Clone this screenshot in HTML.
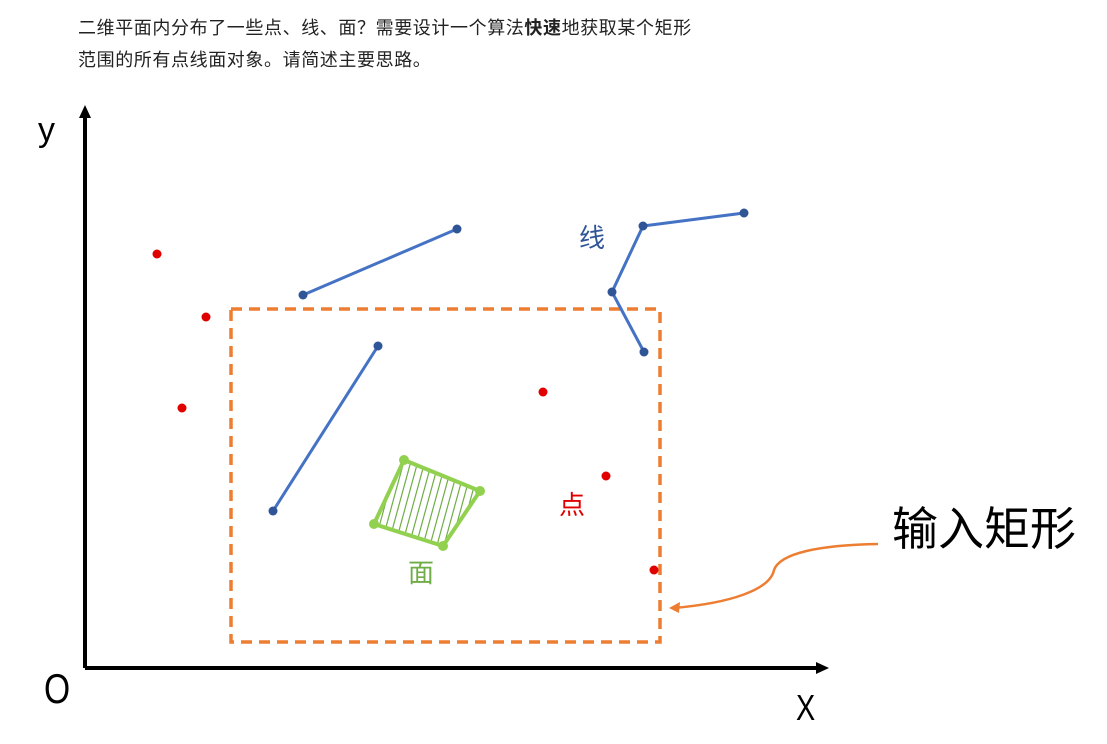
<!DOCTYPE html>
<html><head><meta charset="utf-8"><style>
html,body{margin:0;padding:0;background:#fff;width:1107px;height:744px;overflow:hidden}
.t{position:absolute;left:78px;font-family:"Liberation Sans","Noto Sans CJK SC",sans-serif;font-size:18px;letter-spacing:0.6px;color:#222;line-height:22px;white-space:nowrap}
svg{position:absolute;left:0;top:0}
</style></head><body>
<svg width="1107" height="744" viewBox="0 0 1107 744">
<defs>
<clipPath id="c"><polygon points="404,460 480,491 443,546 374,524"/></clipPath>
</defs>
<line x1="85" y1="668" x2="85" y2="114" stroke="#000" stroke-width="4"/>
<polygon points="85,105 79,118 91,118" fill="#000"/>
<line x1="85" y1="668" x2="818" y2="668" stroke="#000" stroke-width="4"/>
<polygon points="829,668 816,662 816,674" fill="#000"/>
<text x="38" y="141" font-family="Liberation Sans,DejaVu Sans,sans-serif" font-size="34" fill="#000">y</text>
<text x="44" y="703" font-family="Liberation Sans,sans-serif" font-size="42" fill="#000" transform="translate(44 0) scale(0.8 1) translate(-44 0)">O</text>
<text x="796" y="720" font-family="Liberation Sans,sans-serif" font-size="36" fill="#000" transform="translate(796 0) scale(0.8 1) translate(-796 0)">X</text>
<rect x="231" y="309" width="429" height="333" fill="none" stroke="#ED7D31" stroke-width="3.5" stroke-dasharray="11 7"/>
<g stroke="#4472C4" stroke-width="3" fill="none">
<polyline points="303,295 457,229"/>
<polyline points="273,511 378,346"/>
<polyline points="644,352 612,292 643,226 744,213"/>
</g>
<g fill="#2F5597">
<circle cx="303" cy="295" r="4.5"/><circle cx="457" cy="229" r="4.5"/>
<circle cx="273" cy="511" r="4.5"/><circle cx="378" cy="346" r="4.5"/>
<circle cx="644" cy="352" r="4.5"/><circle cx="612" cy="292" r="4.5"/>
<circle cx="643" cy="226" r="4.5"/><circle cx="744" cy="213" r="4.5"/>
</g>
<text x="579" y="247" font-family="Noto Sans CJK SC,sans-serif" font-size="26" fill="#2F5597">线</text>
<g fill="#E00000">
<circle cx="157" cy="254" r="4.5"/><circle cx="206" cy="317" r="4.5"/>
<circle cx="182" cy="408" r="4.5"/><circle cx="543" cy="392" r="4.5"/>
<circle cx="606" cy="476" r="4.5"/><circle cx="654" cy="570" r="4.5"/>
</g>
<text x="559" y="514" font-family="Noto Sans CJK SC,sans-serif" font-size="26" fill="#E00000">点</text>
<g clip-path="url(#c)" stroke="#70AD47" stroke-width="1.2">
<line x1="370" y1="560" x2="400" y2="450"/><line x1="377" y1="560" x2="407" y2="450"/>
<line x1="384" y1="560" x2="414" y2="450"/><line x1="391" y1="560" x2="421" y2="450"/>
<line x1="398" y1="560" x2="428" y2="450"/><line x1="405" y1="560" x2="435" y2="450"/>
<line x1="412" y1="560" x2="442" y2="450"/><line x1="419" y1="560" x2="449" y2="450"/>
<line x1="426" y1="560" x2="456" y2="450"/><line x1="433" y1="560" x2="463" y2="450"/>
<line x1="440" y1="560" x2="470" y2="450"/><line x1="447" y1="560" x2="477" y2="450"/>
<line x1="454" y1="560" x2="484" y2="450"/>
</g>
<polygon points="404,460 480,491 443,546 374,524" fill="none" stroke="#92D050" stroke-width="4" stroke-linejoin="round"/>
<g fill="#92D050">
<circle cx="404" cy="460" r="5"/><circle cx="480" cy="491" r="5"/>
<circle cx="443" cy="546" r="5"/><circle cx="374" cy="524" r="5"/>
</g>
<text x="408" y="582" font-family="Noto Sans CJK SC,sans-serif" font-size="26" fill="#70AD47">面</text>
<path d="M878,544 C820,545 780,553 774,570 C770,590 730,603 674,608" fill="none" stroke="#ED7D31" stroke-width="2.5"/>
<polygon points="669,608 680,602 679,613" fill="#ED7D31"/>
<text x="892" y="545" font-family="Noto Sans CJK SC,sans-serif" font-size="46" fill="#000">输入矩形</text>
</svg>
<div class="t" style="top:17px">二维平面内分布了一些点、线、面？需要设计一个算法<b>快速</b>地获取某个矩形</div>
<div class="t" style="top:49px">范围的所有点线面对象。请简述主要思路。</div>
</body></html>
